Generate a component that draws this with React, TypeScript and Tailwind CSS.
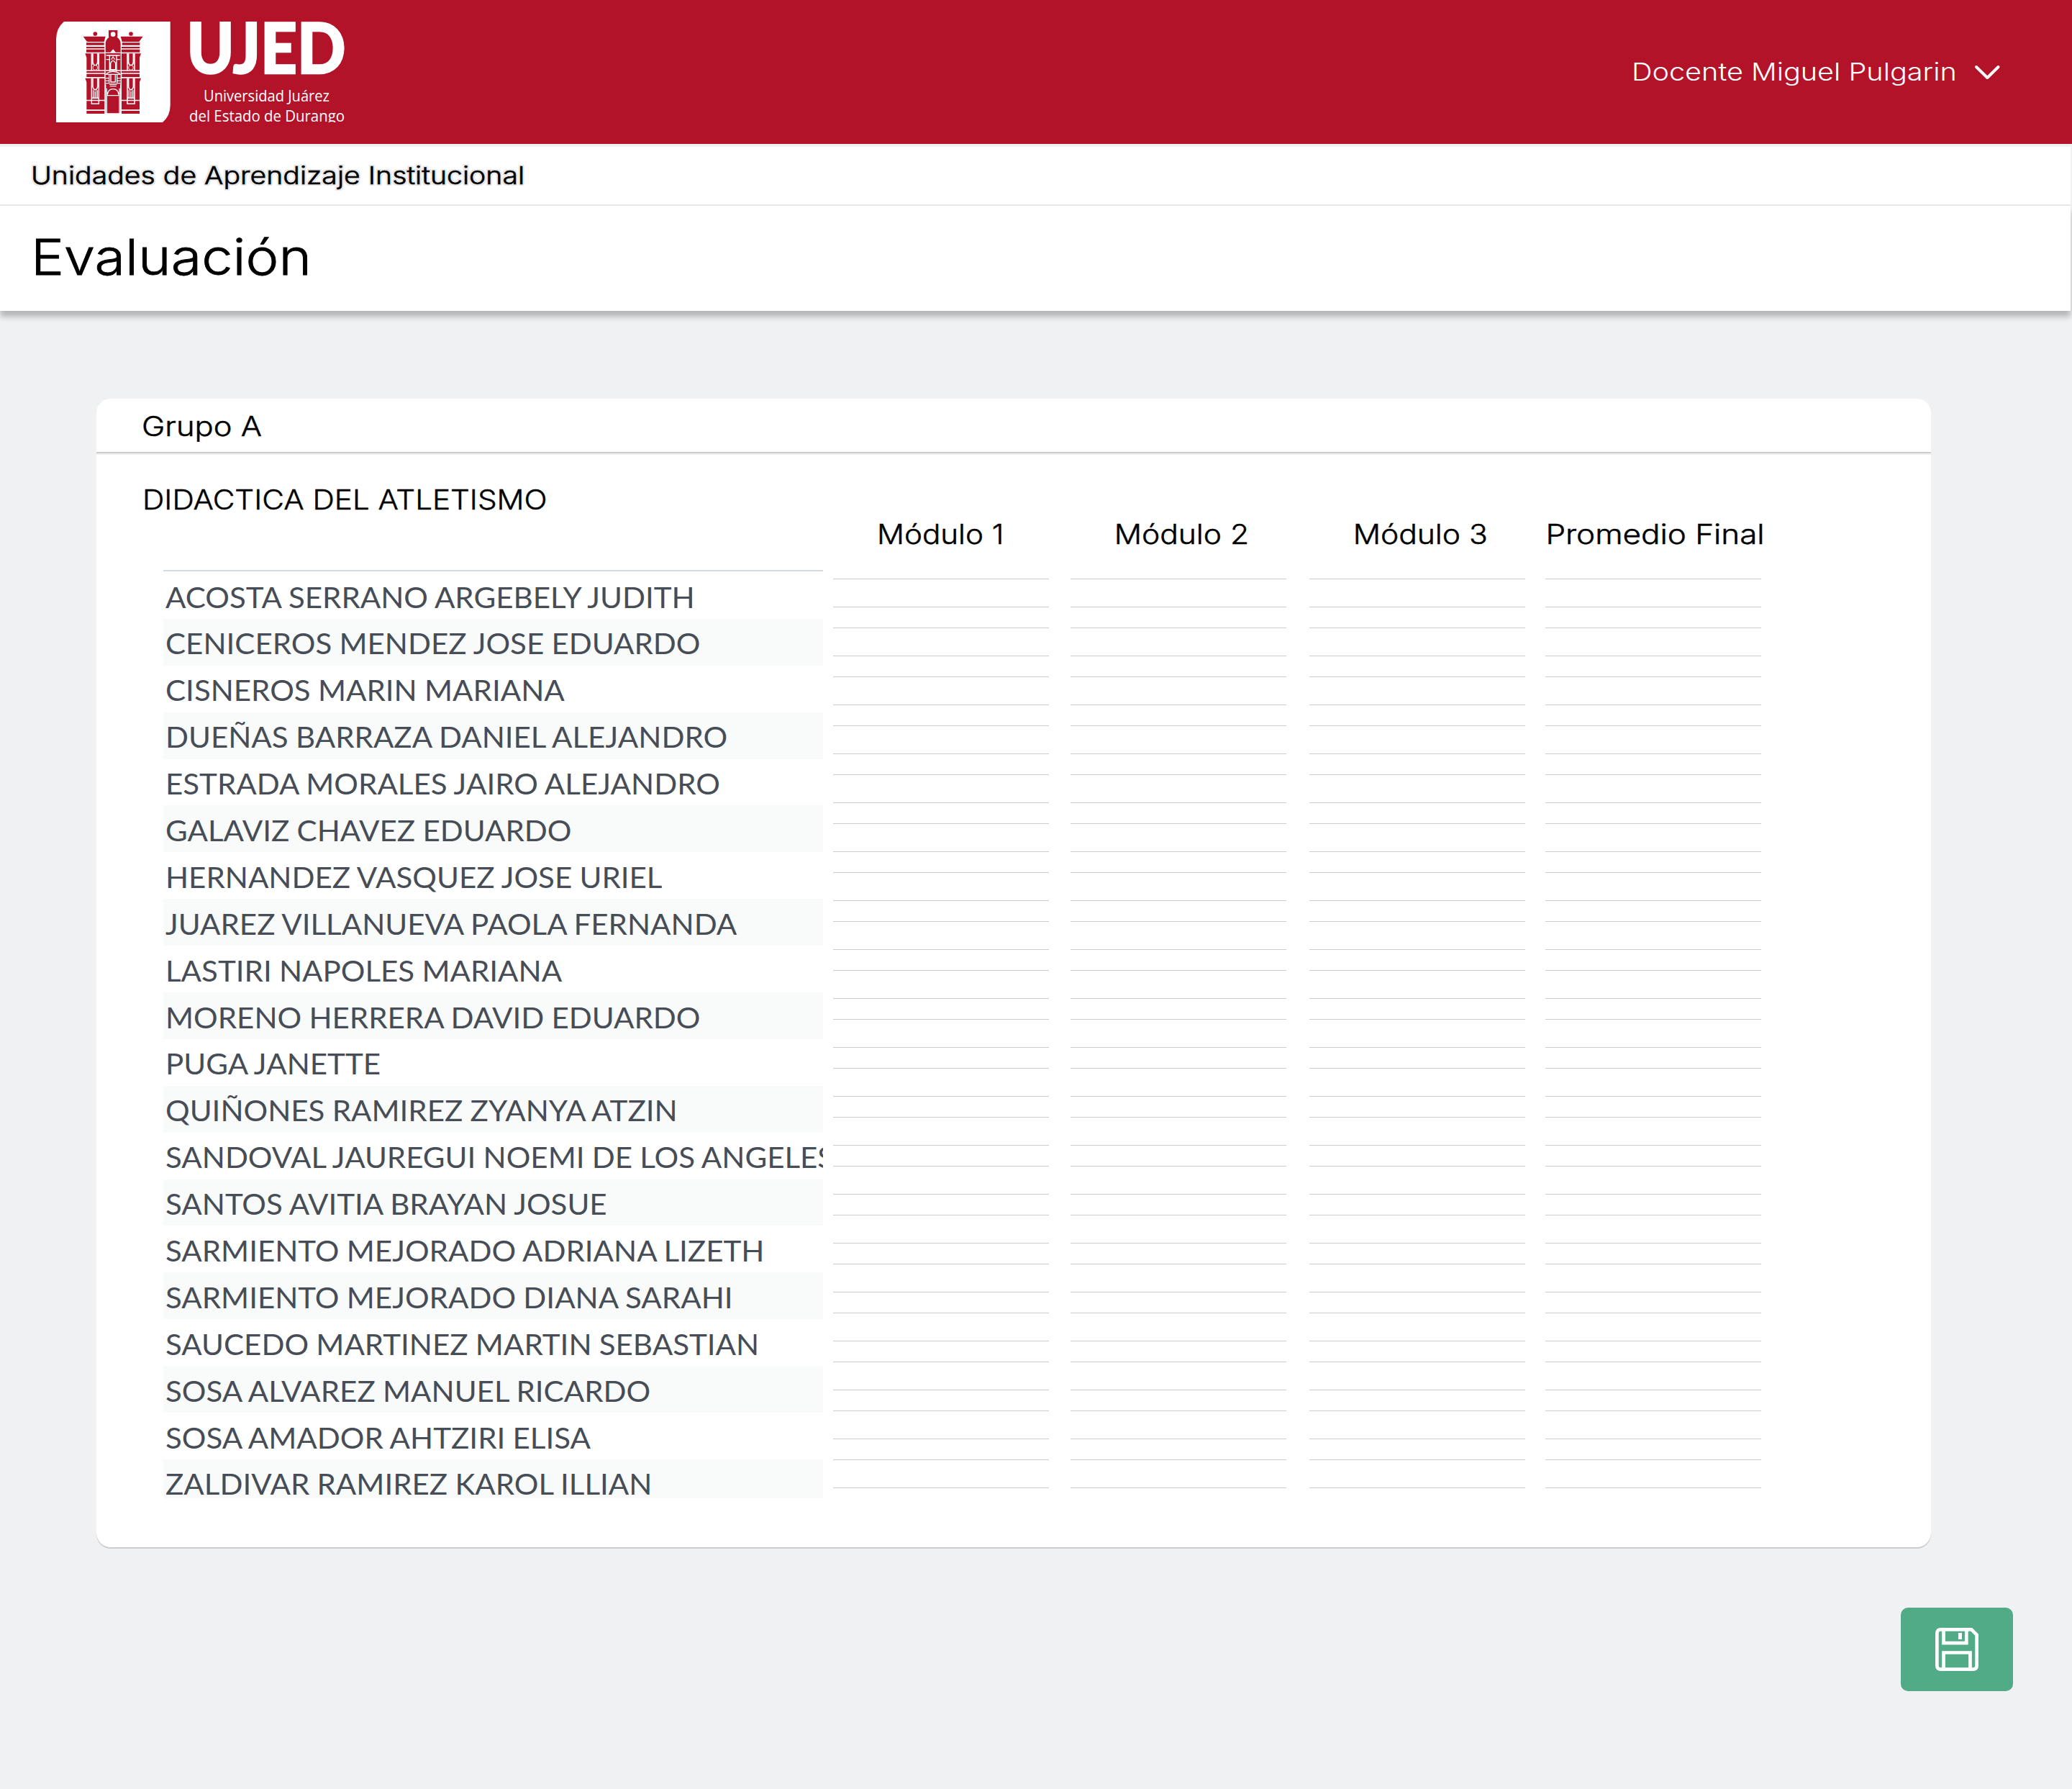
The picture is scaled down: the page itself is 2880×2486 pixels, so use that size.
import type { ReactNode } from "react";

const students = [
  "ACOSTA SERRANO ARGEBELY JUDITH",
  "CENICEROS MENDEZ JOSE EDUARDO",
  "CISNEROS MARIN MARIANA",
  "DUEÑAS BARRAZA DANIEL ALEJANDRO",
  "ESTRADA MORALES JAIRO ALEJANDRO",
  "GALAVIZ CHAVEZ EDUARDO",
  "HERNANDEZ VASQUEZ JOSE URIEL",
  "JUAREZ VILLANUEVA PAOLA FERNANDA",
  "LASTIRI NAPOLES MARIANA",
  "MORENO HERRERA DAVID EDUARDO",
  "PUGA JANETTE",
  "QUIÑONES RAMIREZ ZYANYA ATZIN",
  "SANDOVAL JAUREGUI NOEMI DE LOS ANGELES",
  "SANTOS AVITIA BRAYAN JOSUE",
  "SARMIENTO MEJORADO ADRIANA LIZETH",
  "SARMIENTO MEJORADO DIANA SARAHI",
  "SAUCEDO MARTINEZ MARTIN SEBASTIAN",
  "SOSA ALVAREZ MANUEL RICARDO",
  "SOSA AMADOR AHTZIRI ELISA",
  "ZALDIVAR RAMIREZ KAROL ILLIAN",
];

const columns = [
  { label: "Módulo 1", box: "ml-[14px]", text: "scale-x-[1.1] -ml-px" },
  { label: "Módulo 2", box: "ml-[30px]", text: "scale-x-[1.11] ml-2" },
  { label: "Módulo 3", box: "ml-8", text: "scale-x-[1.11] ml-2" },
  { label: "Promedio Final", box: "ml-7", text: "scale-x-[1.148] ml-[5px]" },
];

const FIELD_ROWS = 19;

function Wide({ className, children }: { className: string; children: ReactNode }) {
  return <span className={`inline-block whitespace-nowrap font-['Inter',sans-serif] font-light ${className}`}>{children}</span>;
}

function Tower() {
  return (
    <g>
      <circle cx="82" cy="51" r="8.5" />
      <path d="M32 62H125L119 84H48Z" />
      <path d="M45 88H119V98H45ZM45 105H121V112H45ZM45 116H121V128H45Z" />
      <path d="M40 133H122V202H46V150Z" />
      <path d="M46 206H122V214H46ZM46 218H120V231H46Z" />
      <path d="M40 236H122V326H46V252Z" />
      <path d="M46 331H122V367H46ZM46 372H122V384H46Z" />
      <g fill="none" stroke="#fff" strokeWidth="4.5">
        <path d="M67 133V205M97 133V205M72 133V170Q74 181 82 183Q90 181 92 170V133" />
        <path d="M67 236V343H97V236M72 236V272Q74 283 82 285Q90 283 92 272V236M74 286V318M90 286V318M82 290V318M68 319H96" />
      </g>
      <path d="M69 135H71V180H69ZM93 135H95V180H93Z" fill="#fff" />
      <circle cx="82" cy="192" r="10" stroke="#fff" strokeWidth="2.5" />
    </g>
  );
}

function Logo() {
  return (
    <svg className="block h-[140px] w-[410px]" viewBox="0 0 410 140">
      <path d="M11 0H158.7V116Q158.7 131 148 140H0V25Q0 9 11 0Z" fill="#fff" />
      <g transform="translate(27 0) scale(.33333)" fill="#b31329">
        <Tower />
        <g transform="translate(313 0) scale(-1 1)">
          <Tower />
        </g>
        <path d="M138 36H175V64Q190 76 190 92V384H123V92Q123 76 138 64Z" stroke="#fff" strokeWidth="4" />
        <path d="M138 36H175V64H138Z" />
        <circle cx="156.5" cy="53" r="10" fill="#fff" />
        <g fill="none" stroke="#fff" strokeWidth="4">
          <path d="M125 130H188M128 141H185M128 158H142M171 158H185M142 141V208M171 141V208M125 204H188M128 217Q156 199 185 217M125 220H188" />
          <path d="M146 200V174Q156 152 167 174V200Z" />
          <path d="M140 220V256M147 220V252H166V220M173 220V256M125 236H140M173 236H188M125 247H140M173 247H188M125 257H142M171 257H188" />
          <path d="M141 261H172M143 269H170M130 278V384M183 278V384M130 308H183M133 304Q136 281 156.5 281Q177 281 180 304" />
          <path d="M125 262V384M188 262V384" />
        </g>
        <path d="M145 128L156.5 115L168 128ZM147 158L156.5 144L166 158Z" fill="#fff" />
        <path d="M151 158L156.5 150L162 158Z" />
      </g>
      <g fill="#fff">
        <text
          x="181.5"
          y="72"
          fontFamily="Lato, sans-serif"
          fontWeight="900"
          fontSize="98"
          stroke="#fff"
          strokeWidth="2.4"
          textLength="221"
          lengthAdjust="spacingAndGlyphs"
        >
          UJED
        </text>
        <text x="205" y="110.7" fontFamily="'Open Sans', sans-serif" fontSize="22.5" textLength="175" lengthAdjust="spacingAndGlyphs">
          Universidad Juárez
        </text>
        <text x="185" y="139" fontFamily="'Open Sans', sans-serif" fontSize="22.5" textLength="216" lengthAdjust="spacingAndGlyphs">
          del Estado de Durango
        </text>
      </g>
    </svg>
  );
}

function SaveIcon() {
  return (
    <svg className="size-[60px]" viewBox="0 0 60 60" fill="none" stroke="#fff" strokeWidth="4.7">
      <path d="M7.5 2.35H50.2L57.65 9.8V52.5Q57.65 57.65 52.5 57.65H7.5Q2.35 57.65 2.35 52.5V7.5Q2.35 2.35 7.5 2.35Z" />
      <path d="M11.5 2V21.2H43.3V2M11.5 58V34.5H48.5V58" />
      <path d="M32 7H37V16H32Z" fill="#fff" stroke="none" />
    </svg>
  );
}

export default function App() {
  return (
    <div className="h-[2486px] w-[2880px] overflow-hidden bg-[#f0f1f3] text-black">
      <header className="flex h-[200px] justify-between bg-[#b31329] pt-[30px] pl-[78px]">
        <Logo />
        <button className="flex h-[139px] w-[612px] items-center text-white">
          <Wide className="origin-left scale-x-[1.155] text-[34.3px] leading-[48px]">Docente Miguel Pulgarin</Wide>
          <svg className="ml-[85px] h-6 w-[38px]" viewBox="0 0 38 24" fill="none" stroke="#fff" strokeWidth="4" strokeLinecap="round" strokeLinejoin="round">
            <path d="M3 5L18.3 20L33.5 5" />
          </svg>
        </button>
      </header>

      <div className="mt-1 flex h-[82px] w-[2878px] items-center border-b-2 border-[#e8e8e8] bg-white pb-px pl-[43px]">
        <Wide className="origin-left scale-x-[1.143] text-[34.3px] leading-[48px] [-webkit-text-stroke:0.6px_#000] [text-shadow:2px_0_#e8e8e8,-2px_0_#e8e8e8,0_2px_#e8e8e8,0_-2px_#e8e8e8,2px_2px_#e8e8e8,-2px_-2px_#e8e8e8,2px_-2px_#e8e8e8,-2px_2px_#e8e8e8]">
          Unidades de Aprendizaje Institucional
        </Wide>
      </div>
      <div className="flex h-[146px] w-[2878px] items-center bg-white pb-1 pl-[43px] shadow-[0_8px_8px_rgba(0,0,0,0.25)]">
        <h1>
          <Wide className="origin-left scale-x-[1.122] text-[69px] leading-[90px] [-webkit-text-stroke:0.8px_#000]">Evaluación</Wide>
        </h1>
      </div>

      <main className="mt-[122px] ml-[134px] h-[1596px] w-[2550px] rounded-[20px] bg-white shadow-[0_2px_0_#cccccc]">
        <div className="flex h-[76px] items-center border-b-2 border-[#cccccc] pt-[2px] pl-[63px]">
          <Wide className="origin-left scale-x-[1.135] text-[38.3px] leading-[50px] [-webkit-text-stroke:0.5px_#000]">Grupo A</Wide>
        </div>
        <div className="h-[2px] bg-[#f0f1f3]" />
        <div className="flex">
          <section className="w-[1010px]">
            <h2 className="mt-[37px] ml-[64px] h-[50px]">
              <Wide className="origin-left scale-x-[1.101] text-[38.3px] leading-[50px] [-webkit-text-stroke:0.5px_#000]">DIDACTICA DEL ATLETISMO</Wide>
            </h2>
            <ul className="mt-[73px] ml-[93px] h-[1290px] w-[917px] overflow-hidden border-t-2 border-[#d5dade] pt-px">
              {students.map((name) => (
                <li key={name} className="h-[64.9px] pt-[1.5px] pl-[2.5px] even:bg-[#f9fbfa]">
                  <span className="inline-block origin-left scale-x-[1.044] font-['Lato',sans-serif] text-[40.3px] leading-[65px] whitespace-nowrap text-[#474d56] [word-spacing:-0.5px]">
                    {name}
                  </span>
                </li>
              ))}
            </ul>
          </section>
          {columns.map((col) => (
            <section key={col.label} className={`w-[300px] pt-[85px] ${col.box}`}>
              <h3 className="flex h-[50px] justify-center">
                <Wide className={`text-[38.3px] leading-[50px] [-webkit-text-stroke:0.5px_#000] ${col.text}`}>{col.label}</Wide>
              </h3>
              <div className="mt-[37px] flex flex-col gap-7">
                {Array.from({ length: FIELD_ROWS }, (_, i) => (
                  <div key={i} className="h-10 border-y border-[#cccccc]" />
                ))}
              </div>
            </section>
          ))}
        </div>
      </main>

      <button className="mt-[84px] ml-[2642px] flex h-[116px] w-[156px] items-center justify-center rounded-[10px] bg-[#51ab87]">
        <SaveIcon />
      </button>
    </div>
  );
}
